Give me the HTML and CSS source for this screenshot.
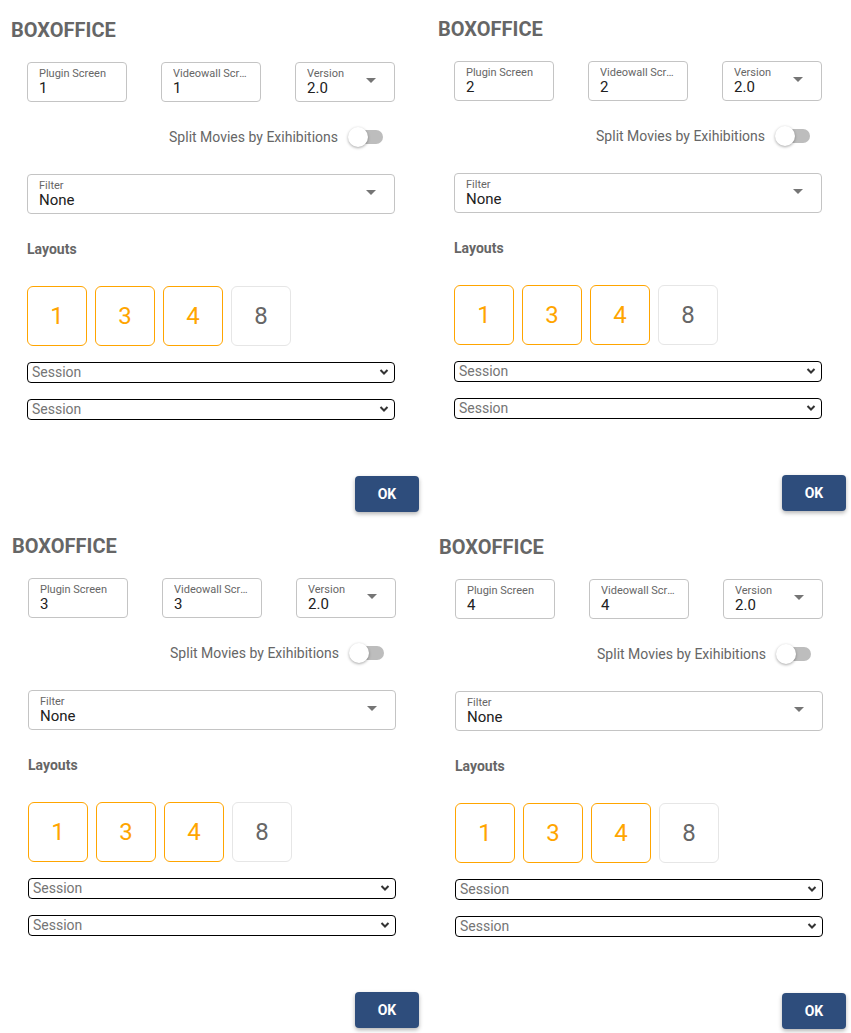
FILE: index.html
```html
<!DOCTYPE html>
<html lang="en">
<head>
<meta charset="utf-8">
<title>Boxoffice</title>
<link rel="stylesheet" href="styles.css">
</head>
<body>
<div class="grid">
  <section class="panel">
    <h2 class="title">BOXOFFICE</h2>
    <div class="fields">
      <div class="field"><span class="label">Plugin Screen</span><span class="value">1</span></div>
      <div class="field"><span class="label">Videowall Screen</span><span class="value">1</span></div>
      <div class="field select"><span class="label">Version</span><span class="value">2.0</span><span class="caret"></span></div>
    </div>
    <div class="toggle-row"><span class="toggle-text">Split Movies by Exihibitions</span><span class="switch"><span class="thumb"></span></span></div>
    <div class="field wide select"><span class="label">Filter</span><span class="value">None</span><span class="caret"></span></div>
    <div class="section-label">Layouts</div>
    <div class="layouts">
      <div class="lay on">1</div><div class="lay on">3</div><div class="lay on">4</div><div class="lay">8</div>
    </div>
    <div class="session"><span>Session</span><svg width="10" height="6" viewBox="0 0 10 6"><path d="M1.5 1 L5 4.5 L8.5 1" fill="none" stroke="#333" stroke-width="2"/></svg></div>
    <div class="session"><span>Session</span><svg width="10" height="6" viewBox="0 0 10 6"><path d="M1.5 1 L5 4.5 L8.5 1" fill="none" stroke="#333" stroke-width="2"/></svg></div>
    <div class="actions"><button class="ok">OK</button></div>
  </section>

  <section class="panel right">
    <h2 class="title">BOXOFFICE</h2>
    <div class="fields">
      <div class="field"><span class="label">Plugin Screen</span><span class="value">2</span></div>
      <div class="field"><span class="label">Videowall Screen</span><span class="value">2</span></div>
      <div class="field select"><span class="label">Version</span><span class="value">2.0</span><span class="caret"></span></div>
    </div>
    <div class="toggle-row"><span class="toggle-text">Split Movies by Exihibitions</span><span class="switch"><span class="thumb"></span></span></div>
    <div class="field wide select"><span class="label">Filter</span><span class="value">None</span><span class="caret"></span></div>
    <div class="section-label">Layouts</div>
    <div class="layouts">
      <div class="lay on">1</div><div class="lay on">3</div><div class="lay on">4</div><div class="lay">8</div>
    </div>
    <div class="session"><span>Session</span><svg width="10" height="6" viewBox="0 0 10 6"><path d="M1.5 1 L5 4.5 L8.5 1" fill="none" stroke="#333" stroke-width="2"/></svg></div>
    <div class="session"><span>Session</span><svg width="10" height="6" viewBox="0 0 10 6"><path d="M1.5 1 L5 4.5 L8.5 1" fill="none" stroke="#333" stroke-width="2"/></svg></div>
    <div class="actions"><button class="ok">OK</button></div>
  </section>

  <section class="panel lower">
    <h2 class="title">BOXOFFICE</h2>
    <div class="fields">
      <div class="field"><span class="label">Plugin Screen</span><span class="value">3</span></div>
      <div class="field"><span class="label">Videowall Screen</span><span class="value">3</span></div>
      <div class="field select"><span class="label">Version</span><span class="value">2.0</span><span class="caret"></span></div>
    </div>
    <div class="toggle-row"><span class="toggle-text">Split Movies by Exihibitions</span><span class="switch"><span class="thumb"></span></span></div>
    <div class="field wide select"><span class="label">Filter</span><span class="value">None</span><span class="caret"></span></div>
    <div class="section-label">Layouts</div>
    <div class="layouts">
      <div class="lay on">1</div><div class="lay on">3</div><div class="lay on">4</div><div class="lay">8</div>
    </div>
    <div class="session"><span>Session</span><svg width="10" height="6" viewBox="0 0 10 6"><path d="M1.5 1 L5 4.5 L8.5 1" fill="none" stroke="#333" stroke-width="2"/></svg></div>
    <div class="session"><span>Session</span><svg width="10" height="6" viewBox="0 0 10 6"><path d="M1.5 1 L5 4.5 L8.5 1" fill="none" stroke="#333" stroke-width="2"/></svg></div>
    <div class="actions"><button class="ok">OK</button></div>
  </section>

  <section class="panel lower right-lower">
    <h2 class="title">BOXOFFICE</h2>
    <div class="fields">
      <div class="field"><span class="label">Plugin Screen</span><span class="value">4</span></div>
      <div class="field"><span class="label">Videowall Screen</span><span class="value">4</span></div>
      <div class="field select"><span class="label">Version</span><span class="value">2.0</span><span class="caret"></span></div>
    </div>
    <div class="toggle-row"><span class="toggle-text">Split Movies by Exihibitions</span><span class="switch"><span class="thumb"></span></span></div>
    <div class="field wide select"><span class="label">Filter</span><span class="value">None</span><span class="caret"></span></div>
    <div class="section-label">Layouts</div>
    <div class="layouts">
      <div class="lay on">1</div><div class="lay on">3</div><div class="lay on">4</div><div class="lay">8</div>
    </div>
    <div class="session"><span>Session</span><svg width="10" height="6" viewBox="0 0 10 6"><path d="M1.5 1 L5 4.5 L8.5 1" fill="none" stroke="#333" stroke-width="2"/></svg></div>
    <div class="session"><span>Session</span><svg width="10" height="6" viewBox="0 0 10 6"><path d="M1.5 1 L5 4.5 L8.5 1" fill="none" stroke="#333" stroke-width="2"/></svg></div>
    <div class="actions"><button class="ok">OK</button></div>
  </section>
</div>
</body>
</html>
```

FILE: styles.css
```css
* { box-sizing: border-box; }
html, body { margin: 0; padding: 0; background: #fff; }
body {
  width: 851px;
  height: 1033px;
  overflow: hidden;
  font-family: Roboto, "Liberation Sans", sans-serif;
  color: #212121;
}
.grid {
  display: grid;
  grid-template-columns: 427px 427px;
  grid-template-rows: 516px 516px;
}
.panel {
  display: flex;
  flex-direction: column;
  padding: 18px 8px 0 27px;
}
.panel.right { padding-top: 17px; }
.panel.lower { padding-left: 28px; }
.panel.right-lower { padding-top: 19px; }
.title {
  margin: 0 0 0 -16px;
  font-size: 20px;
  line-height: 24px;
  font-weight: 700;
  color: #666;
  height: 24px;
}
.fields {
  margin-top: 20px;
  width: 368px;
  display: flex;
  justify-content: space-between;
}
.field {
  position: relative;
  width: 100px;
  height: 40px;
  border: 1px solid #c4c4c4;
  border-radius: 4px;
  padding: 4px 11px 0;
  display: flex;
  flex-direction: column;
}
.field.wide { width: 368px; }
.label {
  font-size: 11px;
  line-height: 13px;
  color: #666;
  max-width: 76px;
  white-space: nowrap;
  overflow: hidden;
  text-overflow: ellipsis;
}
.field.wide .label { max-width: none; }
.value {
  font-size: 15px;
  line-height: 16px;
  color: #212121;
}
.caret {
  position: absolute;
  right: 18px;
  top: 15px;
  width: 0;
  height: 0;
  border-left: 5px solid transparent;
  border-right: 5px solid transparent;
  border-top: 5px solid #757575;
}
.toggle-row {
  margin-top: 21px;
  width: 356px;
  height: 28px;
  display: flex;
  align-items: center;
  justify-content: flex-end;
  gap: 10px;
}
.toggle-text {
  font-size: 14px;
  color: #666;
}
.switch {
  position: relative;
  width: 35px;
  height: 20px;
  display: flex;
  align-items: center;
}
.switch::before {
  content: "";
  display: block;
  margin-left: 7px;
  width: 28px;
  height: 14px;
  border-radius: 7px;
  background: #bdbdbd;
}
.thumb {
  position: absolute;
  left: 0;
  top: 0;
  width: 20px;
  height: 20px;
  border-radius: 50%;
  background: #fff;
  box-shadow: 0 1px 3px rgba(0,0,0,0.35);
}
.toggle-row + .field { margin-top: 23px; }
.section-label {
  margin-top: 25px;
  font-size: 14px;
  line-height: 20px;
  font-weight: 700;
  color: #666;
}
.layouts {
  margin-top: 27px;
  display: flex;
  gap: 8px;
}
.lay {
  width: 60px;
  height: 60px;
  border: 1px solid #e6e6e6;
  border-radius: 6px;
  display: flex;
  align-items: center;
  justify-content: center;
  font-size: 24px;
  color: #666;
}
.lay.on {
  border-color: #ffa500;
  color: #ffa500;
}
.session {
  margin-top: 16px;
  width: 368px;
  height: 21px;
  border: 1px solid #000;
  border-radius: 4px;
  padding: 0 5px 1px 4px;
  display: flex;
  align-items: center;
  justify-content: space-between;
  font-size: 14px;
  color: #757575;
}
.actions {
  margin-top: 56px;
  display: flex;
  justify-content: flex-end;
}
.ok {
  width: 64px;
  height: 36px;
  border: 0;
  border-radius: 4px;
  background: #2e4d7c;
  color: #fff;
  font-family: Roboto, "Liberation Sans", sans-serif;
  font-weight: 700;
  font-size: 14px;
  box-shadow: 0 2px 4px rgba(0,0,0,0.3);
}
```
